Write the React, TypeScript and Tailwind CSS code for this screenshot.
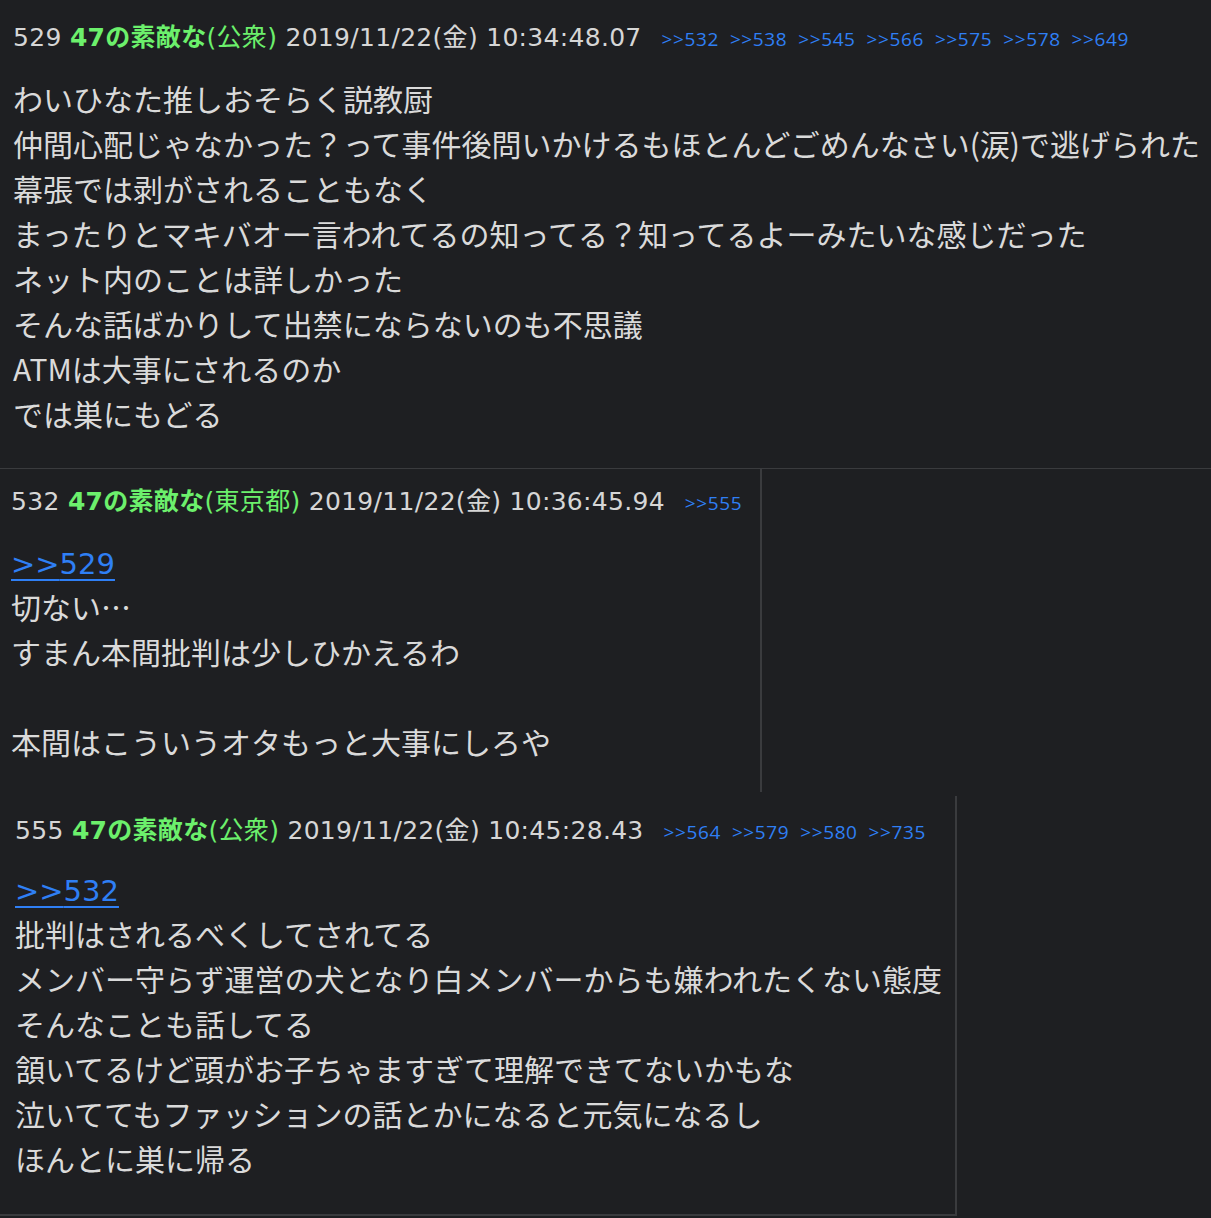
const posts = [
  {
    no: 529,
    name: '47の素敵な',
    area: '公衆',
    date: '2019/11/22(金) 10:34:48.07',
    refs: [532, 538, 545, 566, 575, 578, 649],
    anchor: null as number | null,
    lines: [
      'わいひなた推しおそらく説教厨',
      '仲間心配じゃなかった？って事件後問いかけるもほとんどごめんなさい(涙)で逃げられた',
      '幕張では剥がされることもなく',
      'まったりとマキバオー言われてるの知ってる？知ってるよーみたいな感じだった',
      'ネット内のことは詳しかった',
      'そんな話ばかりして出禁にならないのも不思議',
      'ATMは大事にされるのか',
      'では巣にもどる',
    ],
  },
  {
    no: 532,
    name: '47の素敵な',
    area: '東京都',
    date: '2019/11/22(金) 10:36:45.94',
    refs: [555],
    anchor: 529,
    lines: ['切ない…', 'すまん本間批判は少しひかえるわ', '', '本間はこういうオタもっと大事にしろや'],
  },
  {
    no: 555,
    name: '47の素敵な',
    area: '公衆',
    date: '2019/11/22(金) 10:45:28.43',
    refs: [564, 579, 580, 735],
    anchor: 532,
    lines: [
      '批判はされるべくしてされてる',
      'メンバー守らず運営の犬となり白メンバーからも嫌われたくない態度',
      'そんなことも話してる',
      '頷いてるけど頭がお子ちゃますぎて理解できてないかもな',
      '泣いててもファッションの話とかになると元気になるし',
      'ほんとに巣に帰る',
    ],
  },
];

type Post = (typeof posts)[number];

const headFont = { fontFamily: '"DejaVu Sans", "Noto Sans CJK JP", sans-serif' };
const refFont = { fontFamily: '"Open Sans", sans-serif' };

function Header({ p }: { p: Post }) {
  return (
    <div className="flex items-center h-[36px] whitespace-nowrap">
      <span className="text-[25px] tracking-[0.3px] text-[#d6d6d6]" style={headFont}>
        {p.no} <span className="font-bold text-[#6cf06c]">{p.name}</span>
        <span className="text-[#6cf06c]">({p.area})</span> {p.date}
      </span>
      <span className="ml-[20px] flex gap-[11px] text-[19px] tracking-[0.6px] text-[#2f7ff5] pt-[3px]" style={refFont}>
        {p.refs.map((r) => (
          <span key={r}>&gt;&gt;{r}</span>
        ))}
      </span>
    </div>
  );
}

function Body({ p }: { p: Post }) {
  return (
    <div className="text-[30px] leading-[45px] text-[#dadada] whitespace-nowrap">
      {p.anchor !== null && (
        <div className="h-[45px]">
          <span
            className="text-[29px] text-[#2f7ff5] underline underline-offset-[5px] decoration-[2px]"
            style={{ fontFamily: '"DejaVu Sans", sans-serif' }}
          >
            &gt;&gt;{p.anchor}
          </span>
        </div>
      )}
      {p.lines.map((l, i) => (
        <div key={i} className="h-[45px]">
          {l}
        </div>
      ))}
    </div>
  );
}

export default function App() {
  return (
    <div
      className="w-[1211px] h-[1218px] overflow-hidden bg-[#1e1f22]"
      style={{ fontFamily: '"Noto Sans CJK JP", sans-serif' }}
    >
      <div className="border-b border-[#3a3b3e] pl-[13px] pt-[20px] pb-[32px]">
        <Header p={posts[0]} />
        <div className="mt-[20px]">
          <Body p={posts[0]} />
        </div>
      </div>
      <div className="w-[762px] border-r-[2px] border-[#3a3b3e] pl-[11px] pt-[15px] pb-[28px]">
        <Header p={posts[1]} />
        <div className="mt-[19px]">
          <Body p={posts[1]} />
        </div>
      </div>
      <div className="mt-[4px] w-[957px] border-r-[2px] border-b-[2px] border-[#3a3b3e] pl-[15px] pt-[17px] pb-[33px]">
        <Header p={posts[2]} />
        <div className="mt-[17px]">
          <Body p={posts[2]} />
        </div>
      </div>
    </div>
  );
}
